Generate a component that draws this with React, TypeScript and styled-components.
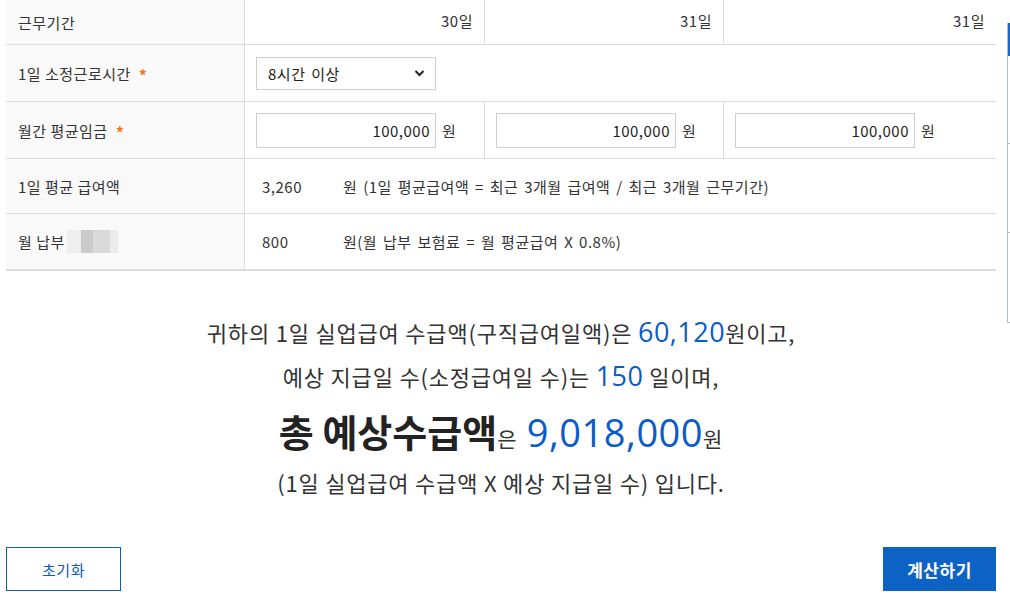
import React from "react";
import styled, { createGlobalStyle } from "styled-components";

const GlobalStyle = createGlobalStyle`
  html, body {
    margin: 0;
    padding: 0;
    background: #fff;
    overflow: hidden;
  }
  body {
    font-family: "Noto Sans CJK KR", "Noto Sans", sans-serif;
    color: #333;
  }
`;

const BLUE = "#0b5cc5";
const LINE = "#dcdcdc";

const Page = styled.div`
  position: relative;
  width: 1010px;
  height: 614px;
  box-sizing: border-box;
  padding: 0 14px 0 6px;
`;

const Table = styled.div`
  display: grid;
  grid-template-columns: 239px 240px 239px 1fr;
  border-bottom: 2px solid ${LINE};
  font-size: 15px;
  letter-spacing: 0.5px;
  word-spacing: 2px;
`;

const Label = styled.div<{ $h: number }>`
  height: ${(p) => p.$h}px;
  box-sizing: border-box;
  display: flex;
  align-items: center;
  padding: 0 12px;
  background: #f9f9f9;
  border-right: 1px solid ${LINE};
  border-bottom: 1px solid ${LINE};
  color: #333;
  gap: 8px;
  word-spacing: 0;
`;

const Cell = styled.div<{ $h: number; $span?: boolean; $last?: boolean; $pad?: number }>`
  height: ${(p) => p.$h}px;
  box-sizing: border-box;
  display: flex;
  align-items: center;
  grid-column: ${(p) => (p.$span ? "2 / 5" : "auto")};
  border-right: ${(p) => (p.$last || p.$span ? "none" : `1px solid ${LINE}`)};
  border-bottom: 1px solid ${LINE};
  padding: 0 11px 0 ${(p) => p.$pad ?? 11}px;
  color: #333;
`;

const LastRowLabel = styled(Label)`
  border-bottom: none;
`;

const LastRowCell = styled(Cell)`
  border-bottom: none;
`;

const Days = styled.span`
  margin-left: auto;
  padding-bottom: 4px;
`;

const Star = styled.span`
  color: #f07a22;
  font-size: 16px;
  font-weight: 700;
  line-height: 1;
  margin-top: 4px;
`;

const SelectBox = styled.div`
  width: 180px;
  height: 33px;
  box-sizing: border-box;
  border: 1px solid #cfcfcf;
  display: flex;
  align-items: center;
  justify-content: space-between;
  padding: 0 10px 0 11px;
  color: #222;
  background: #fff;
`;

const MoneyInput = styled.div`
  width: 180px;
  height: 35px;
  box-sizing: border-box;
  border: 1px solid #cfcfcf;
  display: flex;
  align-items: center;
  justify-content: flex-end;
  padding: 0 5px;
  color: #222;
`;

const Unit = styled.span`
  margin-left: 6px;
`;

const Amount = styled.span`
  width: 81px;
`;

const Blur = styled.span`
  display: inline-block;
  width: 51px;
  height: 23px;
  margin-left: -6px;
  background: linear-gradient(
    to right,
    #eeeeee 0 14px,
    #cbcbcb 14px 26px,
    #dadada 26px 43px,
    #ebebeb 43px 51px
  );
`;

const Result = styled.div`
  margin-top: 39px;
  text-align: center;
  color: #333;
`;

const Line = styled.div<{ $h: number; $size: number }>`
  height: ${(p) => p.$h}px;
  line-height: ${(p) => p.$h}px;
  font-size: ${(p) => p.$size}px;
  letter-spacing: 0.8px;
  white-space: nowrap;
`;

const Num = styled.span<{ $size: number }>`
  color: ${BLUE};
  font-size: ${(p) => p.$size}px;
  letter-spacing: 0.5px;
  font-family: "Open Sans", "Noto Sans", sans-serif;
`;

const Strong = styled.span`
  font-size: 38px;
  font-weight: 700;
  letter-spacing: 0;
  color: #222;
`;

const BigNum = styled.span`
  color: ${BLUE};
  font-size: 38px;
  font-weight: 500;
  letter-spacing: 0.5px;
  margin-left: 4px;
  font-family: "Open Sans", "Noto Sans", sans-serif;
`;

const Buttons = styled.div`
  margin-top: 47px;
  display: flex;
  justify-content: space-between;
`;

const Button = styled.button<{ $primary?: boolean }>`
  height: 44px;
  width: ${(p) => (p.$primary ? 113 : 115)}px;
  box-sizing: border-box;
  border: 1px solid ${(p) => (p.$primary ? "#0d63c4" : "#0d5cb8")};
  background: ${(p) => (p.$primary ? "#0d63c4" : "#fff")};
  color: ${(p) => (p.$primary ? "#fff" : "#0d5cb8")};
  font-family: "Noto Sans CJK KR", sans-serif;
  font-size: ${(p) => (p.$primary ? 17 : 15)}px;
  font-weight: ${(p) => (p.$primary ? 700 : 400)};
  letter-spacing: 0.5px;
  cursor: pointer;
`;

const SideNav = styled.div`
  position: absolute;
  left: 1007px;
  top: 23px;
  width: 20px;
  height: 300px;
  box-sizing: border-box;
  border-left: 1px solid #a8bdd6;
  border-bottom: 1px solid #a8bdd6;
`;

const SideNavHead = styled.div`
  height: 33px;
  background: #1a68c4;
`;

const SideNavTick = styled.div<{ $top: number }>`
  position: absolute;
  left: 0;
  top: ${(p) => p.$top}px;
  width: 3px;
  border-top: 1px solid #a8bdd6;
`;

function Chevron() {
  return (
    <svg width="11" height="8" viewBox="0 0 11 8">
      <path d="M1.5 2 L5.5 6 L9.5 2" fill="none" stroke="#222" strokeWidth="2" />
    </svg>
  );
}

export default function App() {
  const wages = ["100,000", "100,000", "100,000"];
  return (
    <Page>
      <GlobalStyle />
      <Table>
        <Label $h={45}>근무기간</Label>
        <Cell $h={45}><Days>30일</Days></Cell>
        <Cell $h={45}><Days>31일</Days></Cell>
        <Cell $h={45} $last><Days>31일</Days></Cell>

        <Label $h={57}>
          1일 소정근로시간 <Star>*</Star>
        </Label>
        <Cell $h={57} $span>
          <SelectBox>
            8시간 이상
            <Chevron />
          </SelectBox>
        </Cell>

        <Label $h={57}>
          월간 평균임금 <Star>*</Star>
        </Label>
        {wages.map((w, i) => (
          <Cell key={i} $h={57} $last={i === 2}>
            <MoneyInput>{w}</MoneyInput>
            <Unit>원</Unit>
          </Cell>
        ))}

        <Label $h={55}>1일 평균 급여액</Label>
        <Cell $h={55} $span $pad={17}>
          <Amount>3,260</Amount>
          원 (1일 평균급여액 = 최근 3개월 급여액 / 최근 3개월 근무기간)
        </Cell>

        <LastRowLabel $h={55}>
          월 납부<Blur />
        </LastRowLabel>
        <LastRowCell $h={55} $span $pad={17}>
          <Amount>800</Amount>
          원(월 납부 보험료 = 월 평균급여 X 0.8%)
        </LastRowCell>
      </Table>

      <Result>
        <Line $h={44} $size={22}>
          귀하의 1일 실업급여 수급액(구직급여일액)은 <Num $size={27}>60,120</Num>원이고,
        </Line>
        <Line $h={44} $size={22}>
          예상 지급일 수(소정급여일 수)는 <Num $size={27}>150</Num> 일이며,
        </Line>
        <Line $h={66} $size={21}>
          <Strong>총 예상수급액</Strong>은 <BigNum>9,018,000</BigNum>원
        </Line>
        <Line $h={36} $size={22}>
          (1일 실업급여 수급액 X 예상 지급일 수) 입니다.
        </Line>
      </Result>

      <Buttons>
        <Button>초기화</Button>
        <Button $primary>계산하기</Button>
      </Buttons>

      <SideNav>
        <SideNavHead />
        <SideNavTick $top={120} />
        <SideNavTick $top={209} />
      </SideNav>
    </Page>
  );
}
